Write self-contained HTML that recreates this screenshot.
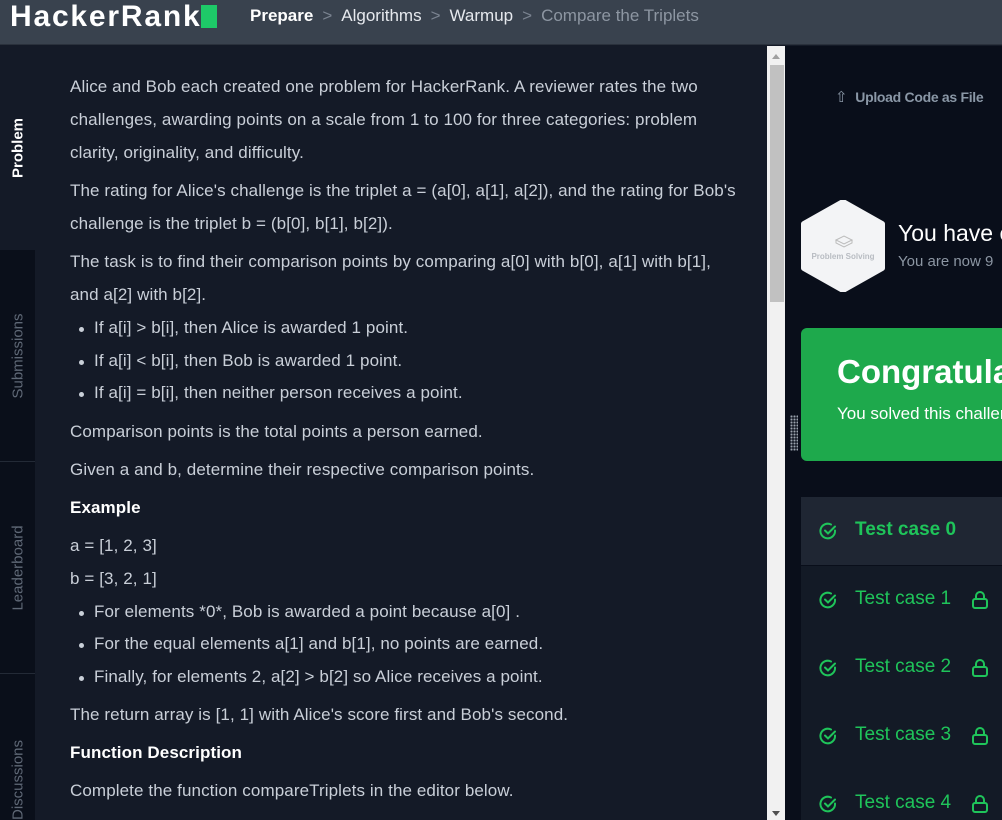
<!DOCTYPE html>
<html><head><meta charset="utf-8"><style>
*{margin:0;padding:0;box-sizing:border-box}
html,body{width:1002px;height:820px;overflow:hidden}
body{background:#141a27;font-family:"Liberation Sans",sans-serif;position:relative}
.hdr{position:absolute;left:0;top:0;width:1002px;height:45px;background:#39424e;border-bottom:1px solid #2a313c}
.logo{position:absolute;left:10px;top:0px;font-size:30px;font-weight:bold;color:#fff;letter-spacing:1.8px}
.logo i{display:inline-block;width:16px;height:23px;background:#1ec968;margin-left:0px;vertical-align:-2px}
.bc{position:absolute;left:250px;top:6px;font-size:17px;color:#e6e9ee}
.bc b{color:#fff}.bc .s{color:#7a8390;margin:0 9px}.bc .g{color:#8d96a2}
.side{position:absolute;left:0;top:46px;width:35px;height:774px;background:#0a0f1a;overflow:hidden}
.tab{position:absolute;left:0;width:35px;border-bottom:1px solid #232a36}
.tab span{position:absolute;left:50%;top:50%;transform:translate(-50%,-50%) rotate(-90deg);white-space:nowrap;font-size:15px;color:#5f6876}
.content{position:absolute;left:70px;top:70px;width:668px;height:740px;overflow:hidden;color:#c9cfd8;font-size:17px;letter-spacing:0.1px;line-height:33px}
.content p{margin-bottom:5px}
.content ul{margin:-4px 0 5px 24px;list-style:none}
.content li{position:relative;line-height:32.5px}
.content li:before{content:"";position:absolute;left:-15px;top:15px;width:5px;height:5px;border-radius:50%;background:#c9cfd8}
.content b{color:#fff}
.sb{position:absolute;left:767px;top:46px;width:18px;height:774px;background:#f1f1f1}
.thumb{position:absolute;left:770px;top:65px;width:14px;height:237px;background:#c1c1c1}
.right{position:absolute;left:785px;top:46px;width:217px;height:774px;background:#090e1a;overflow:hidden}
.up{position:absolute;left:50px;top:42px;font-size:14px;font-weight:bold;color:#8a97a6;letter-spacing:-0.3px}
.hex{position:absolute;left:15px;top:154px}
.you{position:absolute;left:113px;top:174px;color:#fff;font-size:23px;white-space:nowrap}
.you2{position:absolute;left:113px;top:207px;color:#8c96a3;font-size:15px;white-space:nowrap}
.card{position:absolute;left:16px;top:282px;width:220px;height:133px;background:#1ea94c;border-radius:6px}
.card h1{position:absolute;left:36px;top:25px;font-size:33px;color:#fff;white-space:nowrap}
.card div{position:absolute;left:36px;top:76px;font-size:17px;color:#fff;white-space:nowrap}
.grip{position:absolute;left:5px;top:369px;width:8px;height:36px;background-image:radial-gradient(circle,#9aa3ad 1px,transparent 1.2px);background-size:3px 3px}
.tc{position:absolute;left:16px;width:210px;height:68px;background:#131a26;color:#1fc45a;font-size:19px}
.tc.a{background:#1f2633;font-weight:bold}
.tc svg{position:absolute}
.tc span{position:absolute;left:54px;top:22px}
</style></head><body>
<div class="hdr"><div class="logo">HackerRank<i></i></div>
<div class="bc"><b>Prepare</b><span class="s">&gt;</span>Algorithms<span class="s">&gt;</span>Warmup<span class="s">&gt;</span><span class="g">Compare the Triplets</span></div></div>
<div class="side">
<div class="tab" style="top:0;height:204px;background:#141a27;border:none"><span style="color:#fff;font-weight:bold">Problem</span></div>
<div class="tab" style="top:204px;height:212px"><span>Submissions</span></div>
<div class="tab" style="top:416px;height:212px"><span>Leaderboard</span></div>
<div class="tab" style="top:628px;height:212px;border:none"><span>Discussions</span></div>
</div>
<div class="content">
<p>Alice and Bob each created one problem for HackerRank. A reviewer rates the two challenges, awarding points on a scale from 1 to 100 for three categories: problem clarity, originality, and difficulty.</p>
<p>The rating for Alice's challenge is the triplet a = (a[0], a[1], a[2]), and the rating for Bob's challenge is the triplet b = (b[0], b[1], b[2]).</p>
<p>The task is to find their comparison points by comparing a[0] with b[0], a[1] with b[1], and a[2] with b[2].</p>
<ul><li>If a[i] &gt; b[i], then Alice is awarded 1 point.</li><li>If a[i] &lt; b[i], then Bob is awarded 1 point.</li><li>If a[i] = b[i], then neither person receives a point.</li></ul>
<p>Comparison points is the total points a person earned.</p>
<p>Given a and b, determine their respective comparison points.</p>
<p><b>Example</b></p>
<p style="margin-bottom:0">a = [1, 2, 3]</p>
<p>b = [3, 2, 1]</p>
<ul><li>For elements *0*, Bob is awarded a point because a[0] .</li><li>For the equal elements a[1] and b[1], no points are earned.</li><li>Finally, for elements 2, a[2] &gt; b[2] so Alice receives a point.</li></ul>
<p>The return array is [1, 1] with Alice's score first and Bob's second.</p>
<p><b>Function Description</b></p>
<p>Complete the function compareTriplets in the editor below.</p>
</div>
<div class="sb"><div style="position:absolute;left:5px;top:8px;border:4px solid transparent;border-bottom:5px solid #a0a0a0;border-top:0"></div><div style="position:absolute;left:5px;bottom:4px;border:4px solid transparent;border-top:5px solid #505050;border-bottom:0"></div></div>
<div class="thumb"></div>
<div class="right">
<div class="up"><span style="font-size:15px;margin-right:8px;font-weight:normal">⇧</span>Upload Code as File</div>
<svg class="hex" width="86" height="92" viewBox="0 0 86 92"><polygon points="43,2 82,24 82,68 43,90 4,68 4,24" fill="#f3f4f6" stroke="#f3f4f6" stroke-width="6" stroke-linejoin="round"/><text x="43" y="59" font-size="8" font-weight="bold" fill="#b8bcc2" text-anchor="middle" font-family="Liberation Sans">Problem Solving</text><path d="M36 40l8-4 8 4-8 4z M36 40v3l8 4 8-4v-3" fill="none" stroke="#bbb" stroke-width="1"/></svg>
<div class="you">You have e</div><div class="you2">You are now 9</div>
<div class="card"><h1>Congratula</h1><div>You solved this challer</div></div>
<div class="grip"></div>
<div class="tc a" style="top:451px"><svg style="left:18px;top:25px" width="18" height="18" viewBox="0 0 18 18"><path d="M16 8.5A7.3 7.3 0 1 1 12 2.5M6 8.5l3 3 7-7" fill="none" stroke="#1fc45a" stroke-width="2" stroke-linecap="round"/></svg><span>Test case 0</span></div>
<div class="tc" style="top:520px"><svg style="left:18px;top:25px" width="18" height="18" viewBox="0 0 18 18"><path d="M16 8.5A7.3 7.3 0 1 1 12 2.5M6 8.5l3 3 7-7" fill="none" stroke="#1fc45a" stroke-width="2" stroke-linecap="round"/></svg><span>Test case 1</span><svg style="left:170px;top:24px" width="18" height="20" viewBox="0 0 18 20"><rect x="2" y="9" width="14" height="9" rx="2" fill="none" stroke="#1fc45a" stroke-width="2"/><path d="M5 9V6a4 4 0 0 1 8 0v3" fill="none" stroke="#1fc45a" stroke-width="2"/></svg></div>
<div class="tc" style="top:588px"><svg style="left:18px;top:25px" width="18" height="18" viewBox="0 0 18 18"><path d="M16 8.5A7.3 7.3 0 1 1 12 2.5M6 8.5l3 3 7-7" fill="none" stroke="#1fc45a" stroke-width="2" stroke-linecap="round"/></svg><span>Test case 2</span><svg style="left:170px;top:24px" width="18" height="20" viewBox="0 0 18 20"><rect x="2" y="9" width="14" height="9" rx="2" fill="none" stroke="#1fc45a" stroke-width="2"/><path d="M5 9V6a4 4 0 0 1 8 0v3" fill="none" stroke="#1fc45a" stroke-width="2"/></svg></div>
<div class="tc" style="top:656px"><svg style="left:18px;top:25px" width="18" height="18" viewBox="0 0 18 18"><path d="M16 8.5A7.3 7.3 0 1 1 12 2.5M6 8.5l3 3 7-7" fill="none" stroke="#1fc45a" stroke-width="2" stroke-linecap="round"/></svg><span>Test case 3</span><svg style="left:170px;top:24px" width="18" height="20" viewBox="0 0 18 20"><rect x="2" y="9" width="14" height="9" rx="2" fill="none" stroke="#1fc45a" stroke-width="2"/><path d="M5 9V6a4 4 0 0 1 8 0v3" fill="none" stroke="#1fc45a" stroke-width="2"/></svg></div>
<div class="tc" style="top:724px;height:50px"><svg style="left:18px;top:25px" width="18" height="18" viewBox="0 0 18 18"><path d="M16 8.5A7.3 7.3 0 1 1 12 2.5M6 8.5l3 3 7-7" fill="none" stroke="#1fc45a" stroke-width="2" stroke-linecap="round"/></svg><span>Test case 4</span><svg style="left:170px;top:24px" width="18" height="20" viewBox="0 0 18 20"><rect x="2" y="9" width="14" height="9" rx="2" fill="none" stroke="#1fc45a" stroke-width="2"/><path d="M5 9V6a4 4 0 0 1 8 0v3" fill="none" stroke="#1fc45a" stroke-width="2"/></svg></div>
</div>
</body></html>
